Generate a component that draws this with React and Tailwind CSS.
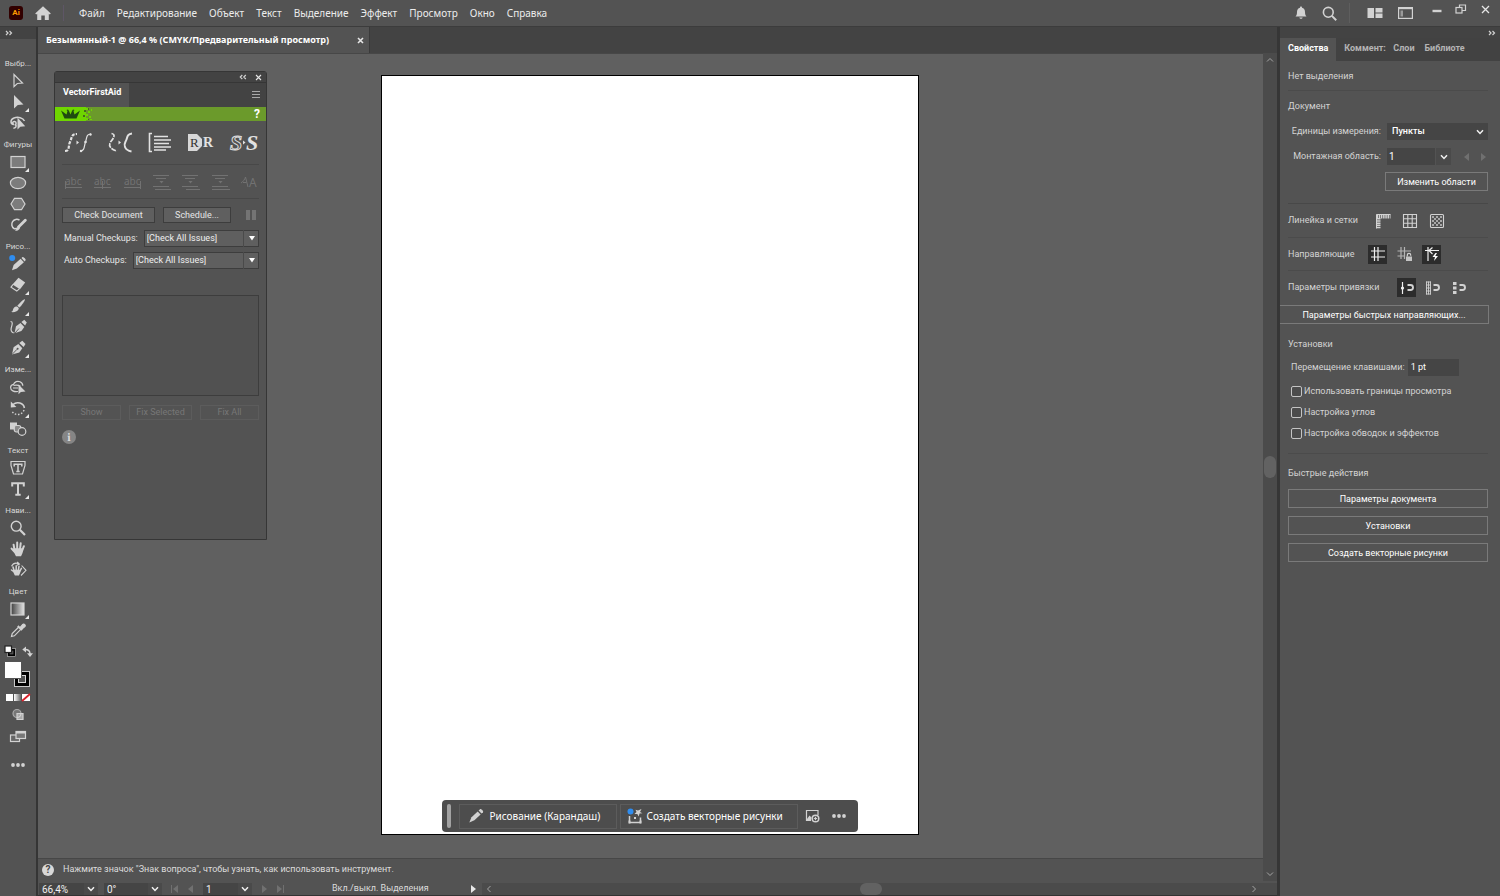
import React from "react";

const LIGHT = "#d2d2d2";

function Svg({ w = 18, h = 18, children, className = "" }) {
  return (
    <svg
      width={w}
      height={h}
      viewBox={`0 0 ${w} ${h}`}
      fill="none"
      stroke={LIGHT}
      strokeWidth="1.2"
      className={`shrink-0 ${className}`}
      aria-hidden="true"
    >
      {children}
    </svg>
  );
}

const Chevron = ({ className = "" }) => (
  <Svg w={8} h={6} className={className}>
    <path d="M1 1.2 4 4.4 7 1.2" stroke="#f0f0f0" strokeWidth="1.5" />
  </Svg>
);

const Guillemet = ({ left }) => (
  <Svg w={8} h={6}>
    {left ? (
      <path d="M3.3 1 1.300 3l2 2M6.8 1 4.800 3l2 2" strokeWidth="1.200" />
    ) : (
      <path d="M1 1l2 2-2 2M4.5 1l2 2-2 2" strokeWidth="1.200" />
    )}
  </Svg>
);

const Close = ({ size = 8, stroke = "1.3" }) => (
  <Svg w={size} h={size}>
    <path d={`M1 1 ${size - 1} ${size - 1}M${size - 1} 1 1 ${size - 1}`} strokeWidth={stroke} stroke="#e6e6e6" />
  </Svg>
);

const Dots = () => (
  <Svg w={16} h={6}>
    <g fill={LIGHT} stroke="none">
      <circle cx="3" cy="3" r="1.9" />
      <circle cx="8" cy="3" r="1.9" />
      <circle cx="13" cy="3" r="1.9" />
    </g>
  </Svg>
);

/* ---------- toolbar glyphs ---------- */

const glyphs = {
  select: <path d="M5 2.5v12.2l3.3-3.2 5.2-.4z" />,
  direct: <path d="M5 2v13.500l3.800-3.600 5.700-.4z" fill={LIGHT} stroke="none" />,
  lasso: (
    <g>
      <path d="M5 10.500C1 10 1 5.500 5 4c4-1.400 9-.4 10.500 3M5 10.500c-2.200-.6-1.500-3.200.6-3 2 .3 2 3 0 3.500M7 11c.4 1.800-.5 3-2.600 3.200" strokeWidth="1.500" />
      <path d="M8.500 3.500v12l2.800-2.700 4.900-.6z" fill={LIGHT} stroke="none" />
    </g>
  ),
  rect: <rect x="2" y="3.500" width="14" height="11" fill="#7c7c7c" />,
  ellipse: <ellipse cx="9" cy="9" rx="7.600" ry="5.600" fill="#7c7c7c" />,
  hexagon: <path d="M5.500 3.300h7L16 9l-3.500 5.700h-7L2 9z" fill="#7c7c7c" />,
  shaper: (
    <g>
      <path d="M10.500 4.200A4.700 4.700 0 1 0 5 12.500c1 .3 2 .2 3-.3" strokeWidth="1.500" />
      <path d="M16.300 4.200 9.500 11" strokeWidth="2.800" strokeLinecap="round" />
      <path d="M9.800 9.800 6 14.800c2 .4 4.500-1 5.200-3.300z" fill={LIGHT} stroke="none" />
    </g>
  ),
  pencil: (
    <g fill={LIGHT} stroke="none">
      <path d="m4.600 9.900 7-6.200 3.300 3.600-7.100 6.100L3 15.300z" />
      <path d="m12.500 2.900 1-.8c.7-.4 1.500.3 2.300 1.200s1.200 1.600.6 2.300l-.8.800z" />
      <circle cx="3.200" cy="3" r="3" fill="#2f8df0" />
    </g>
  ),
  eraser: (
    <g>
      <path d="M9.500 1.800 16.200 6.500l-5.200 6.800-7.500-4.800z" fill={LIGHT} stroke="none" />
      <path d="m4 8.500-2 2.700 5.800 3.900 2.700-2.500" />
    </g>
  ),
  brush: (
    <g fill={LIGHT} stroke="none">
      <path d="M15.800 2.200c1 .7-3.400 6.500-5.400 8.400L8.300 8.800C10 6.700 14.800 1.600 15.800 2.200z" />
      <path d="M7.500 9.500c1.400.3 2.200 1.100 2.300 2.300-.8 2.700-4 3.700-7.800 3.300 1.900-.8 1.800-1.800 2.300-3.300.6-1.500 1.700-2.500 3.200-2.300z" />
    </g>
  ),
  curvature: (
    <g>
      <path d="M1.500 3.500c3 0 1.400 4 .7 6.500-.5 2 .1 4.400 2.500 4.800" />
      <path d="M5.500 15.200 7 8.300l4.500-3.300 3.800 3.900-2.900 4.200z" fill={LIGHT} stroke="none" />
      <path d="m12.400 3.900 2.900-2.200 2.500 2.800-1.700 3.100z" fill={LIGHT} stroke="none" />
      <path d="m6 15 4-4.500" stroke="#535353" strokeWidth=".9" />
    </g>
  ),
  pen: (
    <g>
      <path d="m3 15.500 1.600-7.200L9.300 5l4 4.200-3 4.300z" fill={LIGHT} stroke="none" />
      <path d="m10.300 3.900 3-2.200L16.500 5l-1.900 3.100z" fill={LIGHT} stroke="none" />
      <path d="m3 15.500 5-5.200" stroke="#535353" strokeWidth=".9" />
      <circle cx="8.600" cy="9.800" r="1" fill="#535353" stroke="none" />
    </g>
  ),
  builder: (
    <g>
      <path d="M9 13.500c-4 .6-7.400-1-7.400-4 0-2 1.500-3 3-3.200C5.500 3.600 8.500 2.700 11 3.800c2 .9 2.800 2.500 2.800 4" />
      <path d="M4.500 7.500c2-.5 5-.3 7 .7M4 10h5" />
      <path d="M9.500 6.500v9.800l2.400-2.300 4.600-.5z" fill={LIGHT} stroke="none" />
    </g>
  ),
  rotate: (
    <g>
      <path d="M4 5.500C8 2 14.500 4 15.400 9" strokeWidth="1.600" />
      <path d="M1.800 2.500v6l5.600-.4z" fill={LIGHT} stroke="none" />
      <path d="M15 11c-1.600 5-9 6.500-12.200 1" strokeDasharray="1.500 1.700" strokeWidth="1.400" />
    </g>
  ),
  blend: (
    <g>
      <rect x="1" y="2.500" width="7" height="7" fill={LIGHT} stroke="none" />
      <rect x="5.300" y="5.500" width="6.500" height="6.500" rx="2" fill="#8a8a8a" />
      <circle cx="13" cy="11.500" r="3.800" fill="#535353" />
    </g>
  ),
  touchType: (
    <g>
      <path d="M2 2.500h14v3.800L13.500 15h-9L2 6.300z" />
      <path d="M5.200 7.500V5.300h7.600v2.200M9 5.300v7.200M7.300 12.500h3.400" strokeWidth="1.500" />
    </g>
  ),
  type: <path d="M3.200 6.500V3.200h11.600v3.300M9 3.200v11.500M6.300 14.700h5.400" strokeWidth="2" />,
  zoom: (
    <g>
      <circle cx="7.200" cy="7.200" r="4.900" strokeWidth="1.400" />
      <path d="m10.800 10.800 5.200 5.200" strokeWidth="2.200" />
    </g>
  ),
  hand: (
    <g>
      <path d="M5.500 10 4.600 4.700M8.200 9V2.600M11 9l.7-5.700M13.300 10.200l1.600-4M5.800 12.200 2.600 8.600" strokeWidth="2" strokeLinecap="round" />
      <path d="M4.600 8.200h9.700c0 4-1.300 6-2.300 8H7c-1-1.800-2.400-4.300-2.400-8z" fill={LIGHT} stroke="none" />
    </g>
  ),
  rotateView: (
    <g>
      <path d="M5 9.500 4 6M7.200 9V4.800M9.400 9l.6-3.800M5.200 11 2.500 9M11 10l1.400-2.600" strokeWidth="1.500" strokeLinecap="round" />
      <path d="M4.200 8.800h7.500c0 2.600-1 4-1.800 5.600h-4c-.9-1.500-1.700-2.800-1.700-5.600z" fill={LIGHT} stroke="none" />
      <path d="M2.500 5.300C4 2.500 7 1.700 9.500 2.700M8.200 1l2.200 2-2.500 1.200M12.600 4.500 17 9.300l-5 5.200" strokeWidth="1.100" />
    </g>
  ),
  gradient: (
    <g>
      <defs>
        <linearGradient id="toolGradient">
          <stop offset="0" stopColor="#3f3f3f" />
          <stop offset="1" stopColor="#e4e4e4" />
        </linearGradient>
      </defs>
      <rect x="2" y="3" width="13" height="12" fill="url(#toolGradient)" />
    </g>
  ),
  eyedropper: (
    <g>
      <path d="m9.800 6-6.600 6.600-.7 2.900 2.900-.7 6.600-6.600" />
      <path d="M8.800 5 13 9.200" strokeWidth="1.900" />
      <path d="m11 6.700 2.800-3.400c1-1.100 3.400 1.100 2.100 2.200L12.600 8.300z" fill={LIGHT} stroke={LIGHT} />
    </g>
  ),
};

const toolGroups = [
  { label: "Выбр...", tools: [["select", "Выделение"], ["direct", "Прямое выделение", true], ["lasso", "Лассо"]] },
  { label: "Фигуры", tools: [["rect", "Прямоугольник", true], ["ellipse", "Эллипс"], ["hexagon", "Многоугольник"], ["shaper", "Shaper"]] },
  { label: "Рисо...", tools: [["pencil", "Карандаш"], ["eraser", "Ластик", true], ["brush", "Кисть", true], ["curvature", "Кривизна"], ["pen", "Перо", true]] },
  { label: "Изме...", tools: [["builder", "Создание фигур"], ["rotate", "Поворот", true], ["blend", "Переход"]] },
  { label: "Текст", tools: [["touchType", "Изменение текста"], ["type", "Текст", true]] },
  { label: "Нави...", tools: [["zoom", "Масштаб"], ["hand", "Рука"], ["rotateView", "Поворот просмотра"]] },
  { label: "Цвет", tools: [["gradient", "Градиент", true], ["eyedropper", "Пипетка"]] },
];

function Toolbar() {
  return (
    <aside className="flex w-[38px] shrink-0 flex-col border-r-2 border-[#353535] bg-[#535353]">
      <div className="flex h-3 shrink-0 items-center bg-[#434343] pl-[5px]">
        <Guillemet />
      </div>
      <div className="flex flex-col gap-[3px] pt-[16px]">
        {toolGroups.map((g) => (
          <div key={g.label} className="flex flex-col items-center">
            <div className="h-[15px] text-[8px] leading-[17px] whitespace-nowrap text-[#d8d8d8]">{g.label}</div>
            {g.tools.map(([id, name, more]) => (
              <button key={id} aria-label={name} className="relative flex h-[21px] w-full items-center justify-center">
                <Svg>{glyphs[id]}</Svg>
                {more && (
                  <svg width="4" height="4" className="absolute right-[7px] bottom-0" aria-hidden="true">
                    <path d="M4 0v4H0z" fill="#e8e8e8" />
                  </svg>
                )}
              </button>
            ))}
          </div>
        ))}
      </div>
      <div className="mt-[3px] flex flex-col items-center">
        <div className="flex h-4 w-full items-center justify-between pr-[3px] pl-1">
          <button aria-label="Цвета по умолчанию">
            <Svg w={12} h={12}>
              <rect x="4.500" y="4.500" width="6" height="6" stroke="#000" strokeWidth="2.200" />
              <rect x="3.500" y="3.500" width="8" height="8" strokeWidth=".6" />
              <rect x="1" y="1" width="6.500" height="6.500" fill="#fff" stroke="#222" />
            </Svg>
          </button>
          <button aria-label="Поменять заливку и обводку">
            <Svg w={11} h={11}>
              <path d="M3 3.500c4 0 5 1.500 5 4.500" strokeWidth="1.500" />
              <path d="M4 .5v6L.3 3.500zM5 7.300h6L8 11z" fill={LIGHT} stroke="none" />
            </Svg>
          </button>
        </div>
        <button aria-label="Заливка и обводка" className="mt-[2px] mr-[2px]">
          <Svg w={28} h={28}>
            <rect x="11.500" y="10.500" width="15" height="15" fill="#000" stroke="#c8c8c8" strokeWidth="1" />
            <rect x="15.500" y="14.500" width="7" height="7" fill="#535353" stroke="#d8d8d8" strokeWidth="1" />
            <rect x="1.500" y=".5" width="17" height="17" fill="#fff" stroke="#555" strokeWidth="1" />
          </Svg>
        </button>
        <button aria-label="Цвет, градиент, нет" className="mt-1">
          <Svg w={26} h={9}>
            <defs>
              <linearGradient id="fillGradient">
                <stop offset="0" stopColor="#fff" />
                <stop offset="1" stopColor="#666" />
              </linearGradient>
            </defs>
            <rect x="1" y="1" width="7" height="7" fill="#fff" stroke="none" />
            <rect x="9" y="1" width="7" height="7" fill="url(#fillGradient)" stroke="none" />
            <rect x="17" y="1" width="8" height="7" fill="#fff" stroke="none" />
            <path d="m17 8 8-7" stroke="#d8202a" strokeWidth="1.800" />
          </Svg>
        </button>
        <button aria-label="Режим рисования" className="mt-1">
          <Svg w={18} h={18}>
            <circle cx="8" cy="7.500" r="4" fill="#777" stroke="#aaa" />
            <path d="M8 7.500h6V13.500H8z" fill="#aaa" stroke={LIGHT} />
            <path d="M8 11.500a4 4 0 0 0 4-4" />
          </Svg>
        </button>
        <button aria-label="Режим экрана" className="mt-1">
          <Svg w={18} h={18}>
            <rect x="1.500" y="7" width="9" height="6.500" fill="#666" />
            <rect x="7" y="3.500" width="9.500" height="7" fill="#777" />
            <path d="M7 4.500h9.500" strokeWidth="2" />
          </Svg>
        </button>
        <button aria-label="Изменить панель инструментов" className="mt-4">
          <Dots />
        </button>
      </div>
    </aside>
  );
}

/* ---------- header ---------- */

const menus = ["Файл", "Редактирование", "Объект", "Текст", "Выделение", "Эффект", "Просмотр", "Окно", "Справка"];

function Header() {
  return (
    <header className="flex h-[27px] shrink-0 items-center border-b border-[#3c3c3c] bg-[#535353]">
      <div className="ml-[9px] flex h-[14px] w-[14px] items-center justify-center rounded-[3px] bg-[#310000] text-[8px] leading-none font-bold text-[#ff9a00]">
        Ai
      </div>
      <button aria-label="Главная" className="ml-3">
        <Svg w={16} h={14}>
          <path d="M8 .3 15.800 7.600l-1 1-1-.9V14h-4V9.500H6.300V14H2.200V7.700l-1 .9-1-1z" fill={LIGHT} stroke="none" />
        </Svg>
      </button>
      <div className="ml-3 h-4 w-px bg-[#5e5666]" />
      <nav className="ml-[15px] flex gap-3 font-['Noto_Sans',sans-serif] text-[10px] text-[#ececec]">
        {menus.map((m) => (
          <button key={m} className="whitespace-nowrap">{m}</button>
        ))}
      </nav>
      <div className="ml-auto flex h-full items-center pr-[3px]">
        <button aria-label="Уведомления" className="flex w-7 justify-center">
          <Svg w={12} h={14}>
            <path d="M6 .5c.8 0 1 .5 1 1.200C9 2.300 10 3.800 10 6c0 2.500.5 3.300 1.500 4.500H.500C1.500 9.300 2 8.500 2 6c0-2.200 1-3.700 3-4.300C5 1 5.200.5 6 .5zM4.300 11.500h3.400c-.3 1.800-3.100 1.800-3.400 0z" fill={LIGHT} stroke="none" />
          </Svg>
        </button>
        <button aria-label="Поиск" className="flex w-7 justify-center">
          <Svg w={15} h={15}>
            <circle cx="6.300" cy="6.300" r="4.900" strokeWidth="1.600" />
            <path d="m9.900 9.900 4.300 4.300" strokeWidth="2" />
          </Svg>
        </button>
        <div className="mr-[10px] ml-[6px] h-5 w-px bg-[#5e5e5e]" />
        <button aria-label="Рабочая среда" className="flex w-[30px] justify-center">
          <Svg w={16} h={10}>
            <path d="M.500 0h6.500v10H.500zM8.500 0h7v4.400h-7zM8.500 5.600h7V10h-7z" fill={LIGHT} stroke="none" />
          </Svg>
        </button>
        <button aria-label="Упорядочить документы" className="flex w-[30px] justify-center">
          <Svg w={15} h={12}>
            <rect x=".6" y=".6" width="13.800" height="10.800" />
            <path d="M.6 1.600h13.800" />
            <rect x="2.500" y="3.500" width="2.500" height="6" fill="#9a9a9a" stroke="none" />
          </Svg>
        </button>
        <div className="ml-[5px] flex pb-2">
          <button aria-label="Свернуть" className="flex w-6 items-center justify-center">
            <Svg w={10} h={12}>
              <path d="M.5 8h9" strokeWidth="2.400" />
            </Svg>
          </button>
          <button aria-label="Восстановить" className="flex w-6 items-center justify-center">
            <Svg w={12} h={10}>
              <rect x="1" y="3.500" width="6" height="5.500" />
              <path d="M4.500 3.500V1H10.500v5.500H7" />
            </Svg>
          </button>
          <button aria-label="Закрыть" className="flex w-6 items-center justify-center">
            <Close size={9} />
          </button>
        </div>
      </div>
    </header>
  );
}

/* ---------- plug-in palette ---------- */

const fixGlyphs = [
  ["Объединить пути", 28, (
    <g stroke="#e2e2e2">
      <path d="M1 19c5 0 3-5 5-9s1-8 7-8" strokeWidth="2.200" strokeDasharray="3.200 1.200" />
      <path d="M16 19c5 0 4-5 5.500-9S22 2 27 2" />
      <path d="m12.500 8.500 2.500 2-2.500 2z" fill="#e2e2e2" stroke="none" />
      <circle cx="21.500" cy="10" r="1.300" fill="#e2e2e2" stroke="none" />
      <circle cx="17" cy="19" r="1.200" fill="#e2e2e2" stroke="none" />
      <circle cx="26.500" cy="2.500" r="1.200" fill="#e2e2e2" stroke="none" />
    </g>
  )],
  ["Сгладить пути", 26, (
    <g stroke="#e2e2e2">
      <path d="M4.500 1.500c5 1 1.500 5.500-1 8.500-2.500 3.500.5 8 6.500 9" strokeWidth="1.700" strokeDasharray="5 1" />
      <path d="M25 1.500c-4.500.5-4.500 3-5.500 6s-3 4-1.500 7.500c1 2.500 3.500 4 6.500 4.500" strokeWidth="2" />
      <path d="m11.500 8.500 2.500 2-2.500 2z" fill="#e2e2e2" stroke="none" />
    </g>
  )],
  ["Объединить текст", 24, (
    <g stroke="#e2e2e2">
      <path d="M4 1.500H1.500v18H4" strokeWidth="1.600" />
      <path d="M6 4.500h14M6 8h17M6 11.500h15M6 15h17M6 18h12" strokeWidth="1.300" />
    </g>
  )],
  ["Заменить шрифт", 27, (
    <g>
      <path d="M1 2h9l5 5v7l-5 5H1z" fill="#d8d8d8" stroke="none" />
      <text x="3" y="15" fontSize="13" fontFamily="Liberation Serif, serif" fill="#333" stroke="none">R</text>
      <text x="16" y="15" fontSize="14" fontWeight="bold" fontFamily="Liberation Serif, serif" fill="#e2e2e2" stroke="none">R</text>
    </g>
  )],
  ["Заменить контур", 30, (
    <g fontFamily="Liberation Serif, serif" fontStyle="italic" fontWeight="bold" fontSize="22">
      <text x="1" y="18" fill="none" stroke="#dcdcdc" strokeWidth="1">S</text>
      <text x="17" y="18" fill="#e2e2e2" stroke="none">S</text>
      <path d="m14 8.500 2.500 2-2.500 2z" fill="#e2e2e2" stroke="none" />
    </g>
  )],
];

const DIM = "#727272";
const dimText = (caret) => (
  <g stroke={DIM}>
    <text x="1" y="12" fontSize="10" fontFamily="Noto Sans, sans-serif" fill={DIM} stroke="none">abc</text>
    <path d={`M1 14.500h17M${caret} 8v8`} strokeWidth="1" />
  </g>
);
const dimLines = (n) => (
  <g stroke={DIM} strokeWidth="1">
    <path d={`M1 2.500h16M4 5.500h10M1 13.500h16M${n} 16.500h${19 - n}`} />
    <path d="M7.500 8h4l-2 2.500z" fill={DIM} stroke="none" />
  </g>
);
const alignGlyphs = [
  ["Выровнять слева", dimText(1.5)],
  ["Выровнять по центру", dimText(9.5)],
  ["Выровнять справа", dimText(17.5)],
  ["Интервал сверху", dimLines(3)],
  ["Интервал по центру", dimLines(5)],
  ["Интервал снизу", dimLines(1)],
  ["Преобразовать текст", (
    <g stroke={DIM}>
      <path d="M1 10c2-1 4-4 4.500-6L8 14M3 9.500h3.500" strokeWidth="1" />
      <text x="9" y="14" fontSize="12" fontFamily="Noto Sans, sans-serif" fill={DIM} stroke="none">A</text>
    </g>
  )],
];

function CheckSelect({ id, label }) {
  return (
    <div className="flex h-[22px] items-center pl-[2px]">
      <label htmlFor={id} className="mr-[6px] pt-px whitespace-nowrap">{label}</label>
      <div className="relative flex h-[17px] flex-1 items-center">
        <select id={id} className="h-full w-full appearance-none border border-[#3d3d3d] bg-[#5f5f5f] pl-[2px] text-[9px] leading-none text-[#f0f0f0]">
          <option>[Check All Issues]</option>
        </select>
        <span className="pointer-events-none absolute right-0 flex h-full w-4 items-center justify-center border-l border-[#4a4a4a]">
          <svg width="6" height="5" aria-hidden="true"><path d="M0 0h6L3 4.500z" fill="#fff" /></svg>
        </span>
      </div>
    </div>
  );
}

function Palette() {
  return (
    <section className="absolute top-[17px] left-4 flex h-[469px] w-[213px] flex-col rounded-t-[3px] border border-[#363636] bg-[#535353] text-[9px] text-[#e6e6e6]">
      <div className="flex h-[11px] shrink-0 items-center justify-end gap-2 border-b border-[#363636] bg-[#434343] pr-1">
        <button aria-label="Свернуть панель"><Guillemet left /></button>
        <button aria-label="Закрыть панель"><Close size={7} stroke="1.100" /></button>
      </div>
      <div className="flex h-6 shrink-0 items-stretch justify-between bg-[#434343]">
        <h2 className="flex items-center bg-[#535353] px-2 pb-1 font-bold text-white">VectorFirstAid</h2>
        <button aria-label="Меню панели" className="mr-[5px]">
          <Svg w={10} h={8}><path d="M1 .5h8M1 3.500h8M1 6.500h8" strokeWidth="1" stroke="#a8a8a8" /></Svg>
        </button>
      </div>
      <div className="flex h-[14px] shrink-0 items-center justify-between bg-[#6b9a2b]">
        <svg width="42" height="14" aria-hidden="true">
          <path d="M0 0h31v14H0z" fill="#6fd600" />
          <path d="M31 1h2v2h-2zM33 4h2v2h-2zM31 7h2v2h-2zM34 9h2v2h-2zM31 11h2v2h-2zM36 2h1v2h-1zM35 12h2v1h-2z" fill="#6fd600" />
          <path d="M29 3h2v2h-2zM28 8h2v2h-2zM33 1h1v2h-1zM33 12h1v1h-1z" fill="#456b1c" />
          <path d="M6 3.500 9.500 6l2 1.500 1-3.500-1-1 1.500-.5 1 1.500 1.500 3.500L17 4l1-1.500 1.500.5-1 1 1 3.500 2-1.500L25 3.500 21.500 11.500h-12z" fill="#1f4a10" />
        </svg>
        <button aria-label="Справка" className="mr-[6px] text-[12px] leading-[14px] font-bold text-white">?</button>
      </div>
      <div className="flex flex-1 flex-col px-[7px]">
        <div className="flex h-[44px] items-center justify-between border-b border-[#484848] pl-[2px]">
          {fixGlyphs.map(([name, w, g]) => (
            <button key={name} aria-label={name}><Svg w={w} h={21}>{g}</Svg></button>
          ))}
        </div>
        <div className="flex h-[34px] items-center justify-between border-b border-[#484848] pl-[2px]">
          {alignGlyphs.map(([name, g]) => (
            <button key={name} aria-label={name}><Svg w={19} h={18}>{g}</Svg></button>
          ))}
        </div>
        <div className="mt-2 flex h-4 items-stretch">
          <button className="w-[93px] border border-[#3d3d3d] bg-[#5f5f5f] leading-none">Check Document</button>
          <button className="ml-2 w-[68px] border border-[#3d3d3d] bg-[#5f5f5f] leading-none">Schedule...</button>
          <button aria-label="Пауза" className="ml-[15px]">
            <svg width="10" height="10" aria-hidden="true"><path d="M0 0h4v10H0zM6 0h4v10H6z" fill="#747474" /></svg>
          </button>
        </div>
        <div className="mt-1">
          <CheckSelect id="manual" label="Manual Checkups:" />
          <CheckSelect id="auto" label="Auto Checkups:" />
        </div>
        <div className="mt-6 h-[101px] border border-[#3d3d3d] bg-[#515151]" />
        <div className="mt-[9px] flex h-[15px] justify-between text-[#777]">
          <button disabled className="w-[59px] border border-[#5c5c5c] leading-none">Show</button>
          <button disabled className="w-[63px] border border-[#5c5c5c] leading-none">Fix Selected</button>
          <button disabled className="w-[59px] border border-[#5c5c5c] leading-none">Fix All</button>
        </div>
        <div className="mt-[10px] flex h-[14px] w-[14px] items-center justify-center rounded-full bg-[#858585] font-serif text-[11px] leading-none font-bold text-[#ddd]">
          i
        </div>
      </div>
    </section>
  );
}

/* ---------- document area ---------- */

function TaskBar() {
  return (
    <div className="pointer-events-none absolute inset-x-0 bottom-[26px] flex justify-center pr-[2px]">
      <div className="pointer-events-auto flex h-8 items-center rounded-[4px] bg-[#4d4d4d] pr-[11px] pl-[5px] font-['Noto_Sans',sans-serif] text-[10px] text-white">
        <div className="mr-2 h-6 w-1 rounded-full bg-[#a2a2a2]" />
        <button className="flex h-[25px] w-[158px] items-center gap-[6px] border border-[#5c5c5c] pl-2 whitespace-nowrap">
          <Svg w={16} h={16}>
            <g fill={LIGHT} stroke="none">
              <path d="m3.500 9.200 6.200-5.800 2.900 3L6.400 12.300 1.300 14.500z" />
              <path d="m10.600 2.500 1.700-1.400c.8-.5 3.500 2.200 2.700 3.100l-1.500 1.400z" />
            </g>
          </Svg>
          Рисование (Карандаш)
        </button>
        <button className="ml-[3px] flex h-[25px] w-[178px] items-center gap-[3px] border border-[#5c5c5c] pl-[6px] whitespace-nowrap">
          <Svg w={17} h={17}>
            <path d="M2.500 8v6.500h11V9.500M2.500 14.500h11" strokeWidth="1.500" />
            <path d="M1.500 12.500h2v3h-2zM12.500 12.500h2v3h-2zM7 9h2v2H7z" fill={LIGHT} stroke="none" />
            <path d="M14.500 1 13 4l2.500 1.300-3 .3-.7 3-1.500-2.600-2.800.1 2-2-1-2.300 2.500.8z" fill={LIGHT} stroke="none" />
            <circle cx="3.500" cy="3.500" r="3" fill="#2f8df0" stroke="none" />
          </Svg>
          Создать векторные рисунки
        </button>
        <button aria-label="Поместить изображение" className="ml-[7px]">
          <Svg w={15} h={14}>
            <path d="M6 11.500H1.500v-10h11.500V6" />
            <path d="m2 10 2.500-3.500 2 2L6 11H2z" fill={LIGHT} stroke="none" />
            <circle cx="10.500" cy="9.500" r="3.300" strokeWidth="1.500" />
            <path d="M10.500 7.800v3.400M8.800 9.500h3.400" />
          </Svg>
        </button>
        <button aria-label="Ещё" className="ml-[11px]"><Dots /></button>
      </div>
    </div>
  );
}

const Tri = ({ left, bar, color = "#707070" }) => (
  <svg width="8" height="8" aria-hidden="true" className="shrink-0">
    <path d={left ? "M7 0v8L2 4z" : "M1 0v8l5-4z"} fill={color} />
    {bar && <path d={left ? "M.5 0v8" : "M7.500 0v8"} stroke={color} />}
  </svg>
);

function StatusField({ label, value, width }) {
  return (
    <div className="flex h-full items-center">
      <input aria-label={label} defaultValue={value} className={`h-full bg-[#454545] pl-[3px] text-[10px] text-[#f0f0f0] ${width}`} />
      <button aria-label={`${label}: список`} className="flex h-full w-[14px] items-center justify-center bg-[#4a4a4a]"><Chevron /></button>
    </div>
  );
}

function Document() {
  return (
    <main className="flex min-w-0 flex-1 flex-col">
      <div className="flex h-[26px] shrink-0 bg-[#434343]">
        <div className="flex items-center justify-between border-r border-[#3a3a3a] bg-[#535353] pr-[5px] pl-2 font-['Noto_Sans',sans-serif] text-[9px] font-bold whitespace-nowrap text-white">
          <span>Безымянный-1 @ 66,4 % (CMYK/Предварительный просмотр)</span>
          <button aria-label="Закрыть документ" className="ml-7"><Close size={7} stroke="1.600" /></button>
        </div>
      </div>
      <div className="flex min-h-0 flex-1">
        <div className="flex min-w-0 flex-1 flex-col">
          <div className="relative flex min-h-0 flex-1 justify-center border-y border-[#474747] bg-[#606060] pt-[21px] pr-px pb-[23px]">
            <div className="w-[538px] border border-black bg-white" />
            <Palette />
            <TaskBar />
          </div>
          <div className="flex h-[22px] shrink-0 items-center gap-[9px] pl-1 text-[9px] text-[#dcdcdc]">
            <span className="flex h-3 w-3 items-center justify-center rounded-full bg-[#d8d8d8] text-[10px] leading-none font-bold text-[#444]">?</span>
            Нажмите значок "Знак вопроса", чтобы узнать, как использовать инструмент.
          </div>
        </div>
        <div className="flex w-[14px] shrink-0 flex-col items-center justify-between bg-[#4b4b4b] py-1">
          <Svg w={8} h={6}><path d="M1 4.500 4 1.500l3 3" stroke="#a5a5a5" strokeWidth="1" /></Svg>
          <div className="h-[22px] w-3 rounded-full bg-[#626262]" />
          <Svg w={8} h={6}><path d="M1 1.500 4 4.500l3-3" stroke="#a5a5a5" strokeWidth="1" /></Svg>
        </div>
      </div>
      <div className="flex h-[15px] shrink-0 items-center border-b border-[#333] pt-[2px] text-[9px] text-[#dcdcdc]">
        <div className="flex h-full items-center gap-[6px] pl-px">
          <StatusField label="Масштаб" value="66,4%" width="w-[45px]" />
          <StatusField label="Поворот" value="0°" width="w-[44px]" />
        </div>
        <div className="mr-[9px] ml-[9px] flex gap-[7px]"><Tri left bar /><Tri left /></div>
        <StatusField label="Монтажная область" value="1" width="w-[35px]" />
        <div className="ml-[9px] flex gap-[7px]"><Tri /><Tri bar /></div>
        <span className="ml-12 whitespace-nowrap">Вкл./выкл. Выделения</span>
        <span className="ml-[41px]"><Tri color="#e8e8e8" /></span>
        <div className="ml-1 flex h-full flex-1 items-center justify-between bg-[#4b4b4b] pr-5 pl-1">
          <Svg w={6} h={8}><path d="M4.500 1 1.500 4l3 3" stroke="#a5a5a5" strokeWidth="1" /></Svg>
          <div className="h-3 w-[22px] rounded-full bg-[#626262]" />
          <Svg w={6} h={8}><path d="m1.500 1 3 3-3 3" stroke="#a5a5a5" strokeWidth="1" /></Svg>
        </div>
      </div>
    </main>
  );
}

/* ---------- properties panel ---------- */

const IconButton = ({ name, active, children }) => (
  <button aria-label={name} className={`flex h-[19px] w-[19px] items-center justify-center ${active ? "bg-[#2c2c2c]" : ""}`}>
    <Svg w={16} h={16}>{children}</Svg>
  </button>
);

const magnet = <path d="M8.500 5h3a2.500 2.500 0 0 1 0 5h-3" strokeWidth="1.900" />;

const OutlineButton = ({ children, className = "" }) => (
  <button className={`h-[19px] border border-[#7a7a7a] pt-px text-[9px] leading-none text-white ${className}`}>{children}</button>
);

const Check = ({ id, children }) => (
  <div className="flex h-[21px] items-center gap-[2px] pl-[3px]">
    <input id={id} type="checkbox" className="h-[11px] w-[11px] appearance-none rounded-[2px] border border-[#c4c4c4] bg-[#4c4c4c] checked:bg-[#2f8df0]" />
    <label htmlFor={id} className="pt-px">{children}</label>
  </div>
);

function Properties() {
  return (
    <aside className="flex w-[223px] shrink-0 flex-col border-l-[3px] border-[#363636] bg-[#535353] text-[9px] text-[#d4d4d4]">
      <div className="flex h-[11px] shrink-0 items-center justify-end bg-[#434343] pr-1"><Guillemet /></div>
      <div className="flex h-[23px] shrink-0 bg-[#424242] font-bold text-[#b4b4b4]">
        <button className="bg-[#535353] px-2 pb-px text-white">Свойства</button>
        <button className="ml-2 w-[42px] pb-px text-left whitespace-nowrap">Коммент:</button>
        <button className="ml-[7px] pb-px">Слои</button>
        <button className="ml-[10px] pb-px whitespace-nowrap">Библиоте</button>
      </div>
      <div className="flex flex-col pr-3 pl-2">
        <div className="flex h-[30px] items-center border-b border-[#4b4b4b] pt-[2px]">Нет выделения</div>
        <section className="border-b border-[#484848] pb-[9px]">
          <h3 className="flex h-7 items-center pt-[3px]">Документ</h3>
          <div className="flex h-[25px] items-center justify-end gap-[6px]">
            <label htmlFor="units" className="pt-px">Единицы измерения:</label>
            <div className="relative flex w-[101px] items-center">
              <select id="units" className="h-[17px] w-full appearance-none bg-[#454545] pl-[5px] text-[9px] leading-none font-medium text-white">
                <option>Пункты</option>
              </select>
              <Chevron className="pointer-events-none absolute right-1" />
            </div>
          </div>
          <div className="flex h-[25px] items-center justify-end">
            <label htmlFor="artboard" className="mr-[6px] pt-px">Монтажная область:</label>
            <input id="artboard" defaultValue="1" className="h-[17px] w-12 bg-[#454545] pl-[2px] text-[10px] text-white" />
            <button aria-label="Список областей" className="ml-px flex h-[17px] w-[15px] items-center justify-center bg-[#4a4a4a]"><Chevron /></button>
            <div className="ml-[11px] flex gap-[10px]"><Tri left /><Tri /></div>
          </div>
          <div className="flex h-[25px] items-center justify-end">
            <OutlineButton className="w-[103px]">Изменить области</OutlineButton>
          </div>
        </section>
        <div className="flex h-[34px] items-center border-b border-[#4b4b4b]">
          <span className="flex-1 pt-px">Линейка и сетки</span>
          <div className="mr-[42px] flex gap-2">
            <IconButton name="Линейка">
              <path d="M1.500 3.500h14" strokeWidth="4" strokeDasharray="1.500 .7" />
              <path d="M3.500 5v10.500" strokeWidth="4" strokeDasharray="1.500 .7" />
              <path d="M1.500 15.500v-14H15.500" strokeWidth="1" />
            </IconButton>
            <IconButton name="Сетка">
              <path d="M1.500 1.500h13v13h-13zM5.800 1.500v13M10.200 1.500v13M1.500 5.800h13M1.500 10.200h13" strokeWidth="1.100" />
            </IconButton>
            <IconButton name="Сетка прозрачности">
              <rect x="1.500" y="1.500" width="13" height="13" rx="1" strokeWidth="1.100" />
              <path d="M3 3h2v2H3zM7 3h2v2H7zM11 3h2v2h-2zM5 5h2v2H5zM9 5h2v2H9zM3 7h2v2H3zM7 7h2v2H7zM11 7h2v2h-2zM5 9h2v2H5zM9 9h2v2H9zM3 11h2v2H3zM7 11h2v2H7zM11 11h2v2h-2z" fill="#a8a8a8" stroke="none" />
            </IconButton>
          </div>
        </div>
        <div className="flex h-[33px] items-center border-b border-[#4b4b4b]">
          <span className="flex-1 pt-px">Направляющие</span>
          <div className="mr-[47px] flex gap-2">
            <IconButton name="Показать направляющие" active>
              <path d="M4.500 1v14M8 1v14M1 5h14M1 11h14" stroke="#f0f0f0" />
            </IconButton>
            <IconButton name="Закрепить направляющие">
              <path d="M4 1v12M7.500 1v12M.5 5H14M.5 10h7" stroke="#b4b4b4" />
              <rect x="9" y="10.500" width="6" height="4.500" fill="#c4c4c4" stroke="none" />
              <path d="M10.300 10.500V9a1.700 1.700 0 0 1 3.400 0v.7" />
            </IconButton>
            <IconButton name="Быстрые направляющие" active>
              <path d="M1 4.500h14M4 1v14M5 4.500 8.500 1.500M5 4.500l3.500 3.500" stroke="#f0f0f0" />
              <path d="M11.500 7 8.500 11h2.500l-1 4 4-5h-2.700l1.700-3z" fill="#fff" stroke="none" />
            </IconButton>
          </div>
        </div>
        <div className="flex h-[33px] items-center">
          <span className="flex-1 pt-px">Параметры привязки</span>
          <div className="mr-[20px] flex gap-[7px]">
            <IconButton name="Привязка к точке" active>
              <path d="M3.500 2v12" stroke="#f0f0f0" />
              <circle cx="3.500" cy="8" r="1.600" fill="#f0f0f0" stroke="none" />
              {magnet}
            </IconButton>
            <IconButton name="Привязка к сетке">
              <path d="M1.500 1.500v13M5.500 1.500v13M3.500 1.500v13M1 2h5M1 5h5M1 8h5M1 11h5M1 14h5" strokeWidth=".9" />
              {magnet}
            </IconButton>
            <IconButton name="Привязка к пикселям">
              <path d="M2 2h3.500v3H2zM2 6.500h3.500v3H2zM2 11h3.500v3H2z" fill={LIGHT} stroke="none" />
              {magnet}
            </IconButton>
          </div>
        </div>
        <OutlineButton className="mt-px -mr-px -ml-2 border-l-0">Параметры быстрых направляющих...</OutlineButton>
        <h3 className="mt-2 flex h-6 items-center pt-px">Установки</h3>
        <div className="flex h-[22px] items-center gap-[3px] pl-[3px]">
          <label htmlFor="nudge" className="pt-px">Перемещение клавишами:</label>
          <input id="nudge" defaultValue="1 pt" className="h-[17px] w-[51px] bg-[#454545] pl-[3px] text-[9px] text-white" />
        </div>
        <div className="mt-[3px] border-b border-[#4b4b4b] pb-[9px]">
          <Check id="bounds">Использовать границы просмотра</Check>
          <Check id="corners">Настройка углов</Check>
          <Check id="strokes">Настройка обводок и эффектов</Check>
        </div>
        <h3 className="mt-[3px] flex h-8 items-center pt-[2px]">Быстрые действия</h3>
        <div className="flex flex-col gap-2">
          <OutlineButton>Параметры документа</OutlineButton>
          <OutlineButton>Установки</OutlineButton>
          <OutlineButton>Создать векторные рисунки</OutlineButton>
        </div>
      </div>
    </aside>
  );
}

export default function App() {
  return (
    <div className="flex h-screen flex-col overflow-hidden bg-[#535353] font-[Roboto,'Noto_Sans',sans-serif]">
      <Header />
      <div className="flex min-h-0 flex-1">
        <Toolbar />
        <Document />
        <Properties />
      </div>
    </div>
  );
}
